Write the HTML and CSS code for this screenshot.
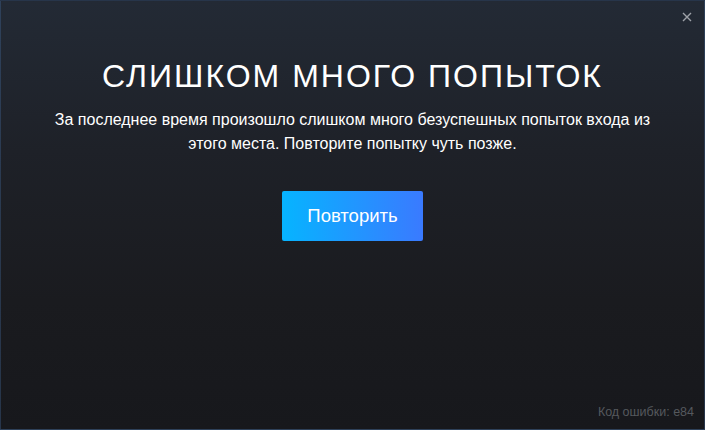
FILE: index.html
```html
<!DOCTYPE html>
<html lang="ru">
<head>
    <meta charset="UTF-8">
    <meta name="viewport" content="width=device-width, initial-scale=1.0">
    <title>Слишком много попыток</title>
    <link rel="stylesheet" href="styles.css">
</head>
<body>
    <div class="dialog">
        <button class="close" aria-label="Закрыть">
            <svg width="10" height="10" viewBox="0 0 10 10">
                <path d="M1 1L9 9M9 1L1 9" stroke="currentColor" stroke-width="1.4" fill="none"/>
            </svg>
        </button>
        <div class="content">
            <h1 class="title">СЛИШКОМ МНОГО ПОПЫТОК</h1>
            <p class="message">За последнее время произошло слишком много безуспешных попыток входа из этого места. Повторите попытку чуть позже.</p>
            <button class="retry">Повторить</button>
        </div>
        <div class="error-code">Код ошибки: e84</div>
    </div>
</body>
</html>
```

FILE: styles.css
```css
html, body {
    margin: 0;
    height: 100%;
}
body {
    background: #18191d;
    font-family: "Liberation Sans", Arial, sans-serif;
    color: white;
}
.dialog {
    position: relative;
    box-sizing: border-box;
    height: 100%;
    display: flex;
    flex-direction: column;
    border: 1px solid rgba(70, 110, 160, 0.35);
    background: linear-gradient(to bottom, #232a35 0%, #1e2128 35%, #1a1b1f 70%, #17181c 100%);
}
.close {
    position: absolute;
    top: 9px;
    right: 12px;
    padding: 0;
    border: none;
    background: none;
    color: #9ea2a8;
    cursor: pointer;
}
.content {
    flex: 1;
    display: flex;
    flex-direction: column;
    align-items: center;
    padding-top: 56px;
}
.title {
    margin: 0;
    font-size: 32px;
    font-weight: normal;
    letter-spacing: 2px;
    line-height: 38px;
}
.message {
    margin: 13px 0 0;
    width: 620px;
    text-align: center;
    font-size: 16px;
    line-height: 24px;
}
.retry {
    margin-top: 35px;
    width: 141px;
    height: 50px;
    border: none;
    border-radius: 2px;
    background: linear-gradient(to right, #06b4ff, #3a7aff);
    color: white;
    font-family: inherit;
    font-size: 18.5px;
    cursor: pointer;
}
.error-code {
    align-self: flex-end;
    padding: 0 10px 10px 0;
    font-size: 12.5px;
    color: #55585d;
}
```
